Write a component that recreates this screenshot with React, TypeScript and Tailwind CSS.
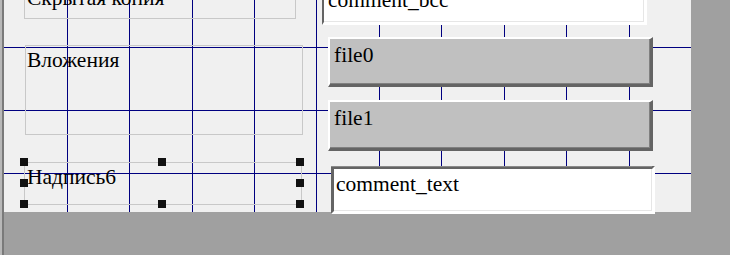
import React from "react";

const vLines = [67, 129, 192, 254, 316, 379, 441, 504, 566, 629];
const hLines = [47, 110, 173];

function Handle({ x, y }: { x: number; y: number }) {
  return <div className="absolute w-[8px] h-[8px] bg-[#111111]" style={{ left: x, top: y }} />;
}

const txt = "text-[21.5px] leading-none text-black whitespace-nowrap font-['Liberation_Serif','Times_New_Roman',serif]";

export default function App() {
  return (
    <div className="relative w-[730px] h-[255px] overflow-hidden bg-[#a0a0a0] font-['Liberation_Serif','Times_New_Roman',serif]">
      {/* left strip */}
      <div className="absolute left-0 top-0 w-[2px] h-full bg-[#b8b8b8]" />
      <div className="absolute left-[2px] top-0 w-[2px] h-full bg-[#7a7a7a]" />

      {/* form canvas */}
      <div className="absolute left-[4px] top-0 w-[687px] h-[212px] bg-[#f0f0f0]" />

      {/* grid */}
      {vLines.map((x) => (
        <div key={"v" + x} className="absolute top-0 w-px h-[212px] bg-[#000080]" style={{ left: x }} />
      ))}
      {hLines.map((y) => (
        <div key={"h" + y} className="absolute left-[4px] w-[687px] h-px bg-[#000080]" style={{ top: y }} />
      ))}

      {/* left column of labels */}
      <div className="absolute left-[24px] top-[-30px] flex flex-col gap-[26px]">
        <div className="w-[272px] h-[49px] border border-[#c8c8c8] pl-[2px] pt-[17px]">
          <div className={txt}>Скрытая копия</div>
        </div>
        <div className="ml-[1px] w-[278px] h-[90px] border border-[#c8c8c8] pl-[1px] pt-[4px]">
          <div className={txt}>Вложения</div>
        </div>
        <div className="mt-[1px] w-[278px] h-[43px] border border-[#c8c8c8] pl-[2px] pt-[4px]">
          <div className={txt}>Надпись6</div>
        </div>
      </div>

      {/* selection handles */}
      <Handle x={20} y={158} />
      <Handle x={158} y={158} />
      <Handle x={296} y={158} />
      <Handle x={20} y={179} />
      <Handle x={296} y={179} />
      <Handle x={20} y={200} />
      <Handle x={158} y={200} />
      <Handle x={296} y={200} />

      {/* right column of controls */}
      <div className="absolute left-[322px] top-[-30px] flex flex-col">
        {/* textbox: comment_bcc */}
        <div className="relative w-[325px] h-[55px] bg-white border-l-2 border-t-2 border-r-[3px] border-b-[3px] border-l-[#646464] border-t-[#646464] border-r-white border-b-white pl-[4px] pt-[18px]">
          <div className="absolute inset-0 border-r border-b border-[#e6e6e6]" />
          <div className={txt}>comment_bcc</div>
        </div>

        {/* button: file0 */}
        <div className="relative mt-[12px] ml-[6px] w-[325px] h-[50px] bg-[#c0c0c0] border-l-2 border-t-2 border-r-[3px] border-b-[3px] border-l-white border-t-white border-r-[#646464] border-b-[#646464] pl-[4px] pt-[6px]">
          <div className="absolute inset-0 border-r border-b border-[#808080]" />
          <div className={txt}>file0</div>
        </div>

        {/* button: file1 */}
        <div className="relative mt-[13px] ml-[6px] w-[325px] h-[51px] bg-[#c0c0c0] border-l-2 border-t-2 border-r-[3px] border-b-[3px] border-l-white border-t-white border-r-[#646464] border-b-[#646464] pl-[4px] pt-[6px]">
          <div className="absolute inset-0 border-r border-b border-[#808080]" />
          <div className={txt}>file1</div>
        </div>

        {/* textbox: comment_text */}
        <div className="relative mt-[15px] ml-[9px] w-[324px] h-[48px] bg-white border-[3px] border-l-[#646464] border-t-[#646464] border-r-white border-b-white pl-[2px] pt-[5px]">
          <div className="absolute left-[-3px] top-[-3px] w-[calc(100%+3px)] h-px bg-[#8a8a8a]" />
          <div className="absolute inset-0 border-r border-b border-[#e6e6e6]" />
          <div className={txt}>comment_text</div>
        </div>
      </div>
    </div>
  );
}
